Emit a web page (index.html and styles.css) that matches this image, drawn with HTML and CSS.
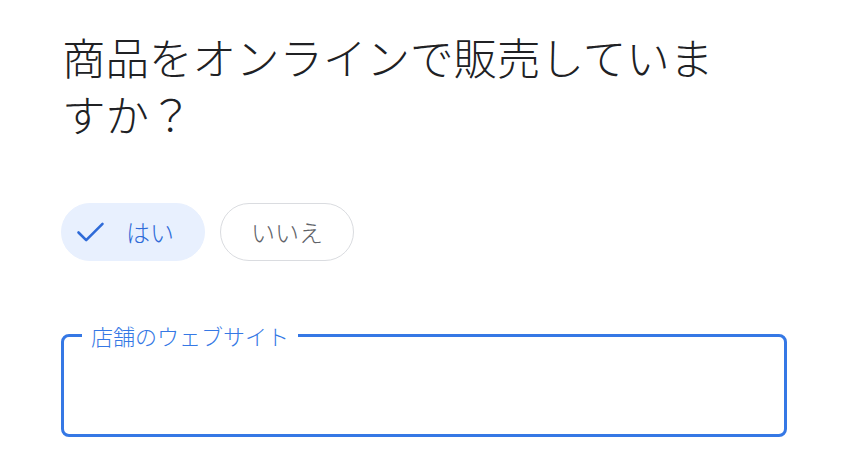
FILE: index.html
```html
<!DOCTYPE html>
<html lang="ja">
<head>
<meta charset="utf-8">
<link rel="stylesheet" href="styles.css">
</head>
<body>
<main class="page">
  <h1 class="title">商品をオンラインで販売していますか？</h1>
  <div class="chips">
    <button class="chip chip-selected" type="button">
      <svg class="check" viewBox="0 0 34 34" width="34" height="34" aria-hidden="true"><path d="M5.5 17.5L13.2 25.2L29.5 8.9" fill="none" stroke="currentColor" stroke-width="2.6" stroke-linecap="round" stroke-linejoin="round"/></svg>
      <span>はい</span>
    </button>
    <button class="chip" type="button"><span>いいえ</span></button>
  </div>
  <fieldset class="field">
    <legend class="field-label">店舗のウェブサイト</legend>
    <input class="field-input" type="text" aria-label="店舗のウェブサイト">
  </fieldset>
</main>
</body>
</html>
```
FILE: styles.css
```css
html, body {
  margin: 0;
  padding: 0;
  background: #ffffff;
}
body {
  font-family: "Noto Sans CJK JP", "Noto Sans", sans-serif;
}
.page {
  padding: 28px 0 0 61px;
  width: 726px;
}
.title {
  margin: 0;
  padding-left: 1px;
  width: 680px;
  font-size: 43.5px;
  font-weight: 300;
  line-height: 57px;
  color: #202124;
}
.chips {
  display: flex;
  gap: 15px;
  margin-top: 61px;
}
.chip {
  display: flex;
  align-items: center;
  height: 58px;
  box-sizing: border-box;
  padding: 0 30px;
  border: 1px solid #dadce0;
  border-radius: 29px;
  background: #ffffff;
  color: #5f6368;
  font-family: "Noto Sans CJK JP", sans-serif;
  font-size: 24px;
  font-weight: 300;
  line-height: 1;
}
.chip-selected {
  border-color: #e8f0fe;
  background: #e8f0fe;
  color: #2f6bd8;
  padding: 0 30px 0 11px;
  gap: 19px;
}
.check {
  display: block;
  flex: none;
}
.field {
  margin: 61px 0 0 0;
  padding: 0 0 0 18px;
  height: 115px;
  box-sizing: border-box;
  border: 3px solid #3578e5;
  border-radius: 8px;
  min-width: 0;
}
.field-label {
  padding: 0 9px;
  font-size: 22px;
  font-weight: 300;
  line-height: 26px;
  color: #3578e5;
}
.field-input {
  border: 0;
  outline: none;
  background: transparent;
  width: 100%;
  height: 60px;
  font-size: 22px;
}
```
